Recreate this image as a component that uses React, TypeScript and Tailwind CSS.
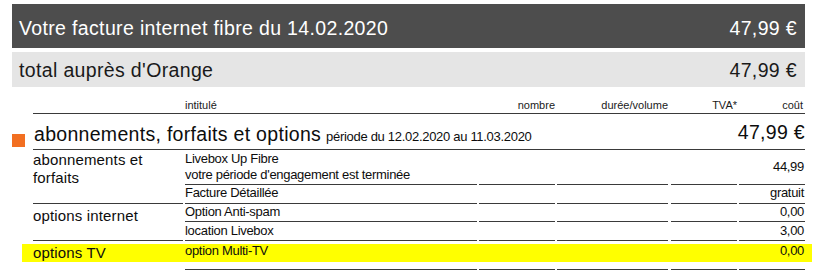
import React from "react";

const LINE = "border-b border-[#3a3a3a]";

function Row({
  h,
  pt,
  label,
  cost,
  center,
}: {
  h: string;
  pt: string;
  label: React.ReactNode;
  cost: string;
  center?: boolean;
}) {
  return (
    <div className={`flex ${h}`}>
      <div className={`w-[292px] ${LINE} ${pt} leading-[16px]`}>{label}</div>
      <div className={`ml-[2px] w-[76px] ${LINE}`} />
      <div className={`ml-[2px] w-[111px] ${LINE}`} />
      <div className={`ml-[3px] w-[66px] ${LINE}`} />
      <div
        className={`ml-[2px] w-[66px] ${LINE} flex justify-end pr-[1px] leading-[16px] ${
          center ? "items-center" : `items-start ${pt}`
        }`}
      >
        {cost}
      </div>
    </div>
  );
}

export default function App() {
  return (
    <div className="w-[827px] h-[278px] overflow-hidden bg-white font-['Liberation_Sans',Arial,sans-serif] text-[#0d0d0d]">
      <div className="pl-[12px] pt-[4px] w-[805px]">
        {/* dark header */}
        <div className="h-[44px] bg-[#4d4d4d] flex items-center justify-between pl-[7px] pr-[8px] pt-[3px] text-white text-[19.5px] leading-[22px] tracking-[0.35px]">
          <span>Votre facture internet fibre du 14.02.2020</span>
          <span>47,99 €</span>
        </div>
        {/* light total */}
        <div className="mt-[4px] h-[35px] bg-[#e5e5e5] flex items-center justify-between pl-[7px] pr-[8px] text-[#1a1a1a] text-[19.5px] leading-[22px] tracking-[0.35px]">
          <span>total auprès d'Orange</span>
          <span>47,99 €</span>
        </div>

        {/* column header */}
        <div className="ml-[21px] w-[772px] h-[27px] flex items-end pb-[1px] border-b border-[#3a3a3a] text-[11px] leading-[13px] text-[#1a1a1a]">
          <div className="w-[152px]" />
          <div className="w-[292px]">intitulé</div>
          <div className="ml-[2px] w-[76px] text-right">nombre</div>
          <div className="ml-[2px] w-[111px] text-right">durée/volume</div>
          <div className="ml-[3px] w-[66px] text-right">TVA*</div>
          <div className="ml-[2px] w-[66px] text-right pr-[2px]">coût</div>
        </div>

        {/* section title */}
        <div className="flex items-end h-[36px]">
          <div className="w-[13px] h-[13px] bg-[#f26f21] mb-[3px]" />
          <div className="ml-[8px] flex-1 h-full border-b border-[#3a3a3a] flex items-end justify-between pb-[4px] pl-[1px]">
            <div className="flex items-baseline">
              <span className="text-[19.5px] leading-[22px] tracking-[0.3px]">
                abonnements, forfaits et options
              </span>
              <span className="ml-[5px] text-[13px] leading-[16px] tracking-[-0.3px]">
                période du 12.02.2020 au 11.03.2020
              </span>
            </div>
            <span className="mb-[2px] text-[19.5px] leading-[22px] tracking-[0.3px]">47,99 €</span>
          </div>
        </div>

        {/* body */}
        <div className="ml-[21px] w-[772px] text-[13px] tracking-[-0.3px]">
          {/* group 1 */}
          <div className="flex">
            <div className="w-[150px] border-b border-[#3a3a3a] pt-[1px] text-[15px] leading-[18px] tracking-[0.15px]">
              abonnements et
              <br />
              forfaits
            </div>
            <div className="ml-[2px] flex flex-col">
              <Row
                h="h-[35px]"
                pt="pt-[1px]"
                center
                label={
                  <>
                    Livebox Up Fibre
                    <br />
                    votre période d'engagement est terminée
                  </>
                }
                cost="44,99"
              />
              <Row h="h-[19px]" pt="pt-[0px]" label="Facture Détaillée" cost="gratuit" />
            </div>
          </div>
          {/* group 2 */}
          <div className="flex">
            <div className="w-[150px] border-b border-[#3a3a3a] pt-[3px] text-[15px] leading-[18px] tracking-[0.15px]">
              options internet
            </div>
            <div className="ml-[2px] flex flex-col">
              <Row h="h-[18px]" pt="pt-[0px]" label="Option Anti-spam" cost="0,00" />
              <Row h="h-[19px]" pt="pt-[1px]" label="location Livebox" cost="3,00" />
            </div>
          </div>
          {/* group 3 (highlighted) */}
          <div className="relative">
            <div className="absolute top-[3px] h-[18px] left-[-11px] right-[-7px] bg-[#ffff00]" />
            <div className="relative flex">
              <div className="w-[150px] pt-[3px] text-[15px] leading-[18px] tracking-[0.15px]">
                options TV
              </div>
              <div className="ml-[2px] flex flex-col">
                <Row h="h-[29px]" pt="pt-[2px]" label="option Multi-TV" cost="0,00" />
              </div>
            </div>
          </div>
        </div>
      </div>
    </div>
  );
}
